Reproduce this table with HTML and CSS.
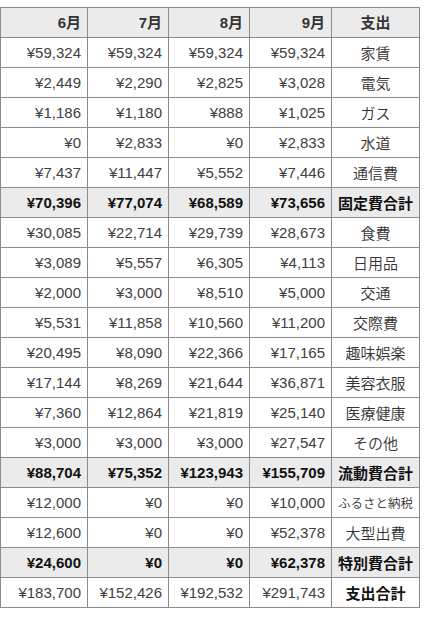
FILE: index.html
```html
<!DOCTYPE html>
<html lang="ja">
<head>
<meta charset="utf-8">
<title>支出</title>
<link rel="stylesheet" href="styles.css">
</head>
<body>
<div class="viewport">
<table class="sheet">
  <thead>
    <tr>
      <th class="c-prev"></th>
      <th class="c-jun">6月</th>
      <th class="c-mon">7月</th>
      <th class="c-mon">8月</th>
      <th class="c-sep">9月</th>
      <th class="c-label">支出</th>
    </tr>
  </thead>
  <tbody>
    <tr><td></td><td>¥59,324</td><td>¥59,324</td><td>¥59,324</td><td>¥59,324</td><td class="label">家賃</td></tr>
    <tr><td></td><td>¥2,449</td><td>¥2,290</td><td>¥2,825</td><td>¥3,028</td><td class="label">電気</td></tr>
    <tr><td></td><td>¥1,186</td><td>¥1,180</td><td>¥888</td><td>¥1,025</td><td class="label">ガス</td></tr>
    <tr><td></td><td>¥0</td><td>¥2,833</td><td>¥0</td><td>¥2,833</td><td class="label">水道</td></tr>
    <tr><td></td><td>¥7,437</td><td>¥11,447</td><td>¥5,552</td><td>¥7,446</td><td class="label">通信費</td></tr>
    <tr class="subtotal"><td></td><td>¥70,396</td><td>¥77,074</td><td>¥68,589</td><td>¥73,656</td><td class="label">固定費合計</td></tr>
    <tr><td></td><td>¥30,085</td><td>¥22,714</td><td>¥29,739</td><td>¥28,673</td><td class="label">食費</td></tr>
    <tr><td></td><td>¥3,089</td><td>¥5,557</td><td>¥6,305</td><td>¥4,113</td><td class="label">日用品</td></tr>
    <tr><td></td><td>¥2,000</td><td>¥3,000</td><td>¥8,510</td><td>¥5,000</td><td class="label">交通</td></tr>
    <tr><td></td><td>¥5,531</td><td>¥11,858</td><td>¥10,560</td><td>¥11,200</td><td class="label">交際費</td></tr>
    <tr><td></td><td>¥20,495</td><td>¥8,090</td><td>¥22,366</td><td>¥17,165</td><td class="label">趣味娯楽</td></tr>
    <tr><td></td><td>¥17,144</td><td>¥8,269</td><td>¥21,644</td><td>¥36,871</td><td class="label">美容衣服</td></tr>
    <tr><td></td><td>¥7,360</td><td>¥12,864</td><td>¥21,819</td><td>¥25,140</td><td class="label">医療健康</td></tr>
    <tr><td></td><td>¥3,000</td><td>¥3,000</td><td>¥3,000</td><td>¥27,547</td><td class="label">その他</td></tr>
    <tr class="subtotal"><td></td><td>¥88,704</td><td>¥75,352</td><td>¥123,943</td><td>¥155,709</td><td class="label">流動費合計</td></tr>
    <tr><td></td><td>¥12,000</td><td>¥0</td><td>¥0</td><td>¥10,000</td><td class="label small">ふるさと納税</td></tr>
    <tr><td></td><td>¥12,600</td><td>¥0</td><td>¥0</td><td>¥52,378</td><td class="label">大型出費</td></tr>
    <tr class="subtotal"><td></td><td>¥24,600</td><td>¥0</td><td>¥0</td><td>¥62,378</td><td class="label">特別費合計</td></tr>
    <tr class="total"><td></td><td>¥183,700</td><td>¥152,426</td><td>¥192,532</td><td>¥291,743</td><td class="label">支出合計</td></tr>
  </tbody>
</table>
</div>
</body>
</html>
```
FILE: styles.css
```css
html, body {
  margin: 0;
  padding: 0;
  background: #ffffff;
}

body {
  padding-top: 7px;
  font-family: "Liberation Sans", Arial, "Noto Sans CJK JP", sans-serif;
  font-size: 15px;
  color: #404040;
}

.viewport {
  width: 420px;
  display: flex;
  justify-content: flex-end;
  overflow: hidden;
}

.sheet {
  flex: none;
  table-layout: fixed;
  border-collapse: separate;
  border-spacing: 0;
  border-top: 1px solid #8a8a8a;
  border-left: 1px solid #8a8a8a;
}

.sheet th,
.sheet td {
  box-sizing: border-box;
  padding: 0 6px;
  line-height: 29px;
  height: 30px;
  border-right: 1px solid #8a8a8a;
  border-bottom: 1px solid #8a8a8a;
  text-align: right;
  white-space: nowrap;
  overflow: hidden;
  vertical-align: middle;
}

.sheet th {
  background: #ebebeb;
  font-weight: bold;
  color: #333333;
}

.c-prev { width: 81px; }
.c-jun { width: 87px; }
.c-mon { width: 81px; }
.c-sep { width: 82px; }
.c-label { width: 88px; }

.sheet th.c-label,
.sheet td.label {
  text-align: center;
  padding: 0 2px;
}

.sheet td.label {
  color: #333333;
  font-family: "Noto Sans CJK JP", sans-serif;
  font-weight: 350;
}

.sheet td.small {
  font-size: 12.5px;
}

.subtotal td {
  background: #ebebeb;
  font-weight: bold;
  color: #111111;
}

.sheet .subtotal td.label,
.sheet .total td.label {
  font-weight: bold;
  color: #111111;
}
```
